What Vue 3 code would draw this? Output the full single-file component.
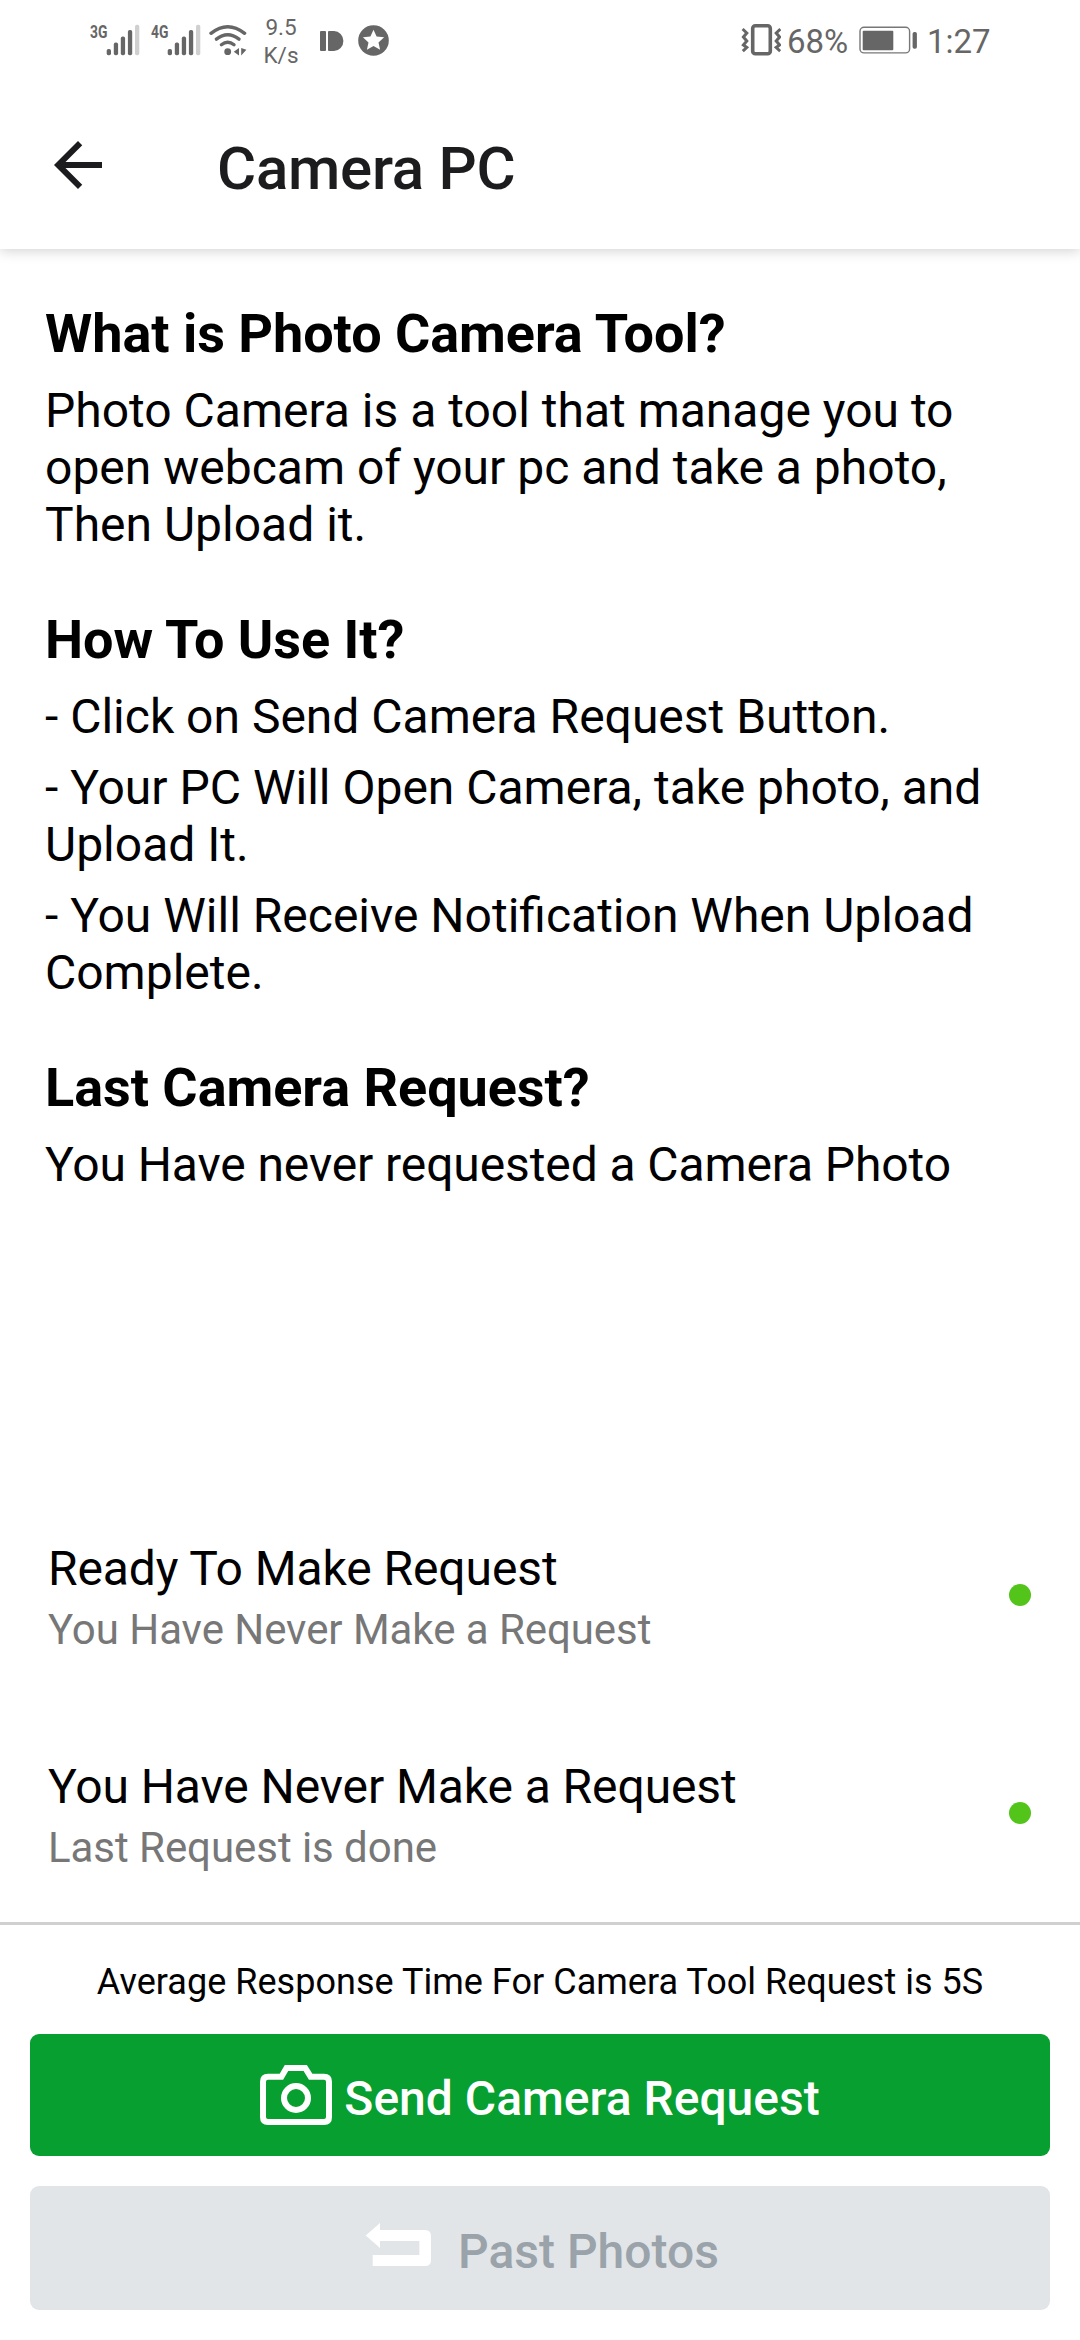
<script setup>
const sections = [
  {
    title: 'What is Photo Camera Tool?',
    lines: ['Photo Camera is a tool that manage you to open webcam of your pc and take a photo, Then Upload it.']
  },
  {
    title: 'How To Use It?',
    lines: [
      '- Click on Send Camera Request Button.',
      '- Your PC Will Open Camera, take photo, and Upload It.',
      '- You Will Receive Notification When Upload Complete.'
    ]
  },
  {
    title: 'Last Camera Request?',
    lines: ['You Have never requested a Camera Photo'],
    tight: true
  }
]

const statuses = [
  { title: 'Ready To Make Request', note: 'You Have Never Make a Request' },
  { title: 'You Have Never Make a Request', note: 'Last Request is done' }
]

const signals = ['3G', '4G']
</script>

<template>
  <div class="screen">
    <div class="status-bar">
      <div class="status-left">
        <svg v-for="s in signals" :key="s" class="signal" width="61" height="40" viewBox="0 0 61 40">
          <text x="0" y="18.4" textLength="17.4" lengthAdjust="spacingAndGlyphs">{{ s }}</text>
          <g fill="#666">
            <rect x="16.7" y="29" width="4.3" height="6.2" rx="1.8" />
            <rect x="23.8" y="22.6" width="4.3" height="12.6" rx="1.8" />
            <rect x="30.8" y="16.6" width="4.3" height="18.6" rx="1.8" />
            <rect x="37.9" y="10" width="4.3" height="25.2" rx="1.8" />
          </g>
          <rect x="45" y="4.8" width="4.3" height="30.4" rx="1.8" fill="#d0d0d0" />
        </svg>
        <svg class="wifi" width="40" height="40" viewBox="208 20 40 40">
          <g fill="none" stroke="#666" stroke-width="3.4" stroke-linecap="round">
            <path d="M211 33.3Q227.7 20 244.6 33.3" />
            <path d="M216.4 39.1Q227.7 30.2 239 39.1" />
            <path d="M221.4 44.7Q227.7 39.6 234 44.7" />
          </g>
          <circle cx="227.7" cy="51.7" r="3.4" fill="#666" />
          <path d="M233.8 51.7L239 48V55.4ZM241.2 48V55.4L246.4 49.8Z" fill="#666" />
        </svg>
        <div class="speed"><span>9.5</span><span>K/s</span></div>
        <svg class="id-icon" width="24" height="20" viewBox="0 0 24 20">
          <rect x="0" y="0" width="6" height="20" rx="1" fill="#666" />
          <path d="M9 0H14A9.4 10 0 0 1 14 20H9Q8 20 8 19V1Q8 0 9 0Z" fill="#666" />
        </svg>
        <svg class="star-icon" width="31" height="31" viewBox="-15.5 -15.5 31 31">
          <circle r="15.3" fill="#666" />
          <path d="M0-10.8L3.1-3.9 10.6-3.2 5 1.9 6.6 9.3 0 5.5-6.6 9.3-5 1.9-10.6-3.2-3.1-3.9Z" fill="#fff" />
        </svg>
      </div>
      <div class="status-right">
        <svg width="40" height="34" viewBox="741 23 40 34">
          <rect x="752.7" y="25.8" width="17.6" height="28" rx="2.6" fill="none" stroke="#666" stroke-width="3.6" />
          <g fill="none" stroke="#666" stroke-width="3">
            <path d="M742.6 29L746.8 33 743.4 37 746.8 41 743.4 45 746.8 47.5 742.8 51.2" />
            <path d="M780.4 29L776.2 33 779.6 37 776.2 41 779.6 45 776.2 47.5 780.2 51.2" />
          </g>
        </svg>
        <span class="pct">68%</span>
        <svg width="59" height="28" viewBox="859 26 59 28">
          <rect x="860" y="27.3" width="49.6" height="25.6" rx="4" fill="none" stroke="#777" stroke-width="1.4" />
          <rect x="862.7" y="30.7" width="30.6" height="19.6" rx="1" fill="#666" />
          <rect x="912.6" y="32" width="4.3" height="16.8" rx="1.8" fill="#666" />
        </svg>
        <span class="clock">1:27</span>
      </div>
    </div>

    <header class="app-bar">
      <svg width="72" height="72" viewBox="0 0 24 24">
        <path d="M20 11H7.83l5.59-5.59L12 4l-8 8 8 8 1.41-1.41L7.83 13H20z" fill="#1c1c1e" />
      </svg>
      <h1>Camera PC</h1>
    </header>

    <main>
      <section v-for="s in sections" :key="s.title" :class="{ tight: s.tight }">
        <h2>{{ s.title }}</h2>
        <p v-for="l in s.lines" :key="l">{{ l }}</p>
      </section>
    </main>

    <div class="statuses">
      <div v-for="s in statuses" :key="s.title" class="status-row">
        <div>
          <div class="row-title">{{ s.title }}</div>
          <div class="row-note">{{ s.note }}</div>
        </div>
        <span class="dot"></span>
      </div>
    </div>

    <footer>
      <p class="average">Average Response Time For Camera Tool Request is 5S</p>
      <button class="btn primary">
        <svg width="72" height="60" viewBox="260 2065 72 60">
          <g fill="none" stroke="#fff" stroke-width="6">
            <path d="M268 2076.7H281.4L286.5 2068H305.2L310.6 2076.7H324Q329 2076.7 329 2081.7V2117Q329 2122 324 2122H268Q263 2122 263 2117V2081.7Q263 2076.7 268 2076.7Z" />
            <circle cx="296" cy="2098" r="12" />
          </g>
        </svg>
        <span>Send Camera Request</span>
      </button>
      <button class="btn secondary" disabled>
        <svg width="72" height="44" viewBox="361 2223 72 44">
          <path d="M365.7 2235.4L380 2223V2230H425Q431 2230 431 2236V2260Q431 2266 425 2266H372.7V2255H419.4V2241H380V2248Z" fill="#fff" />
        </svg>
        <span>Past Photos</span>
      </button>
    </footer>
  </div>
</template>

<style>
body {
  margin: 0;
  background: #fff;
}
</style>

<style scoped>
.screen {
  display: flex;
  flex-direction: column;
  width: 1080px;
  height: 2340px;
  overflow: hidden;
  background: #fff;
  color: #000;
  font-family: Roboto, "Noto Sans", sans-serif;
}
h1, h2, p {
  margin: 0;
}
svg {
  display: block;
  flex: none;
}
.status-bar {
  position: relative;
  z-index: 1;
  display: flex;
  justify-content: space-between;
  height: 84px;
  padding: 0 89px 0 90px;
  box-sizing: border-box;
  background: #fff;
  color: #666;
}
.status-left,
.status-right {
  display: flex;
  align-items: flex-start;
}
.signal {
  margin-top: 20px;
}
.signal text {
  font-size: 19px;
  font-weight: 700;
  fill: #666;
}
.wifi {
  margin: 20px 0 0 -4px;
}
.speed {
  display: flex;
  flex-direction: column;
  align-items: center;
  width: 34px;
  margin: 14px 0 0 16px;
  font-size: 22.5px;
  line-height: 27.5px;
}
.id-icon {
  margin: 31px 0 0 22px;
}
.star-icon {
  margin: 25px 0 0 13.5px;
}
.status-right {
  font-size: 33px;
  line-height: 39px;
}
.status-right svg:first-child {
  margin-top: 23px;
}
.pct {
  width: 78px;
  padding-left: 6px;
  margin-top: 22px;
  box-sizing: border-box;
}
.status-right svg:nth-of-type(2) {
  margin-top: 26px;
}
.clock {
  width: 64px;
  margin: 22px 0 0 9px;
}
.app-bar {
  display: flex;
  height: 165px;
  box-sizing: border-box;
  padding: 45px 0 0 42px;
  box-shadow: 0 2px 12px rgba(0, 0, 0, 0.18);
}
h1 {
  margin: 5px 0 0 103px;
  font-size: 60px;
  line-height: 70px;
  font-weight: 500;
  letter-spacing: -0.25px;
  color: #1c1c1e;
}
main {
  padding: 53px 75px 0 45px;
}
section + section {
  margin-top: 55px;
}
h2 {
  margin-bottom: 17px;
  font-size: 54px;
  line-height: 63px;
  font-weight: 700;
  letter-spacing: -0.04px;
}
section p {
  font-size: 48px;
  line-height: 57px;
}
section p + p {
  margin-top: 14px;
}
.tight p {
  letter-spacing: -0.1px;
}
.statuses {
  display: flex;
  flex-direction: column;
  gap: 104px;
  margin-top: auto;
  padding: 0 49px 50px 48px;
}
.status-row {
  display: flex;
  align-items: center;
  justify-content: space-between;
}
.row-title {
  font-size: 48px;
  line-height: 57px;
  letter-spacing: -0.09px;
}
.row-note {
  margin-top: 8px;
  font-size: 42px;
  line-height: 49px;
  letter-spacing: -0.05px;
  color: #777;
}
.dot {
  width: 22px;
  height: 22px;
  margin-top: -5px;
  border-radius: 50%;
  background: #52c41a;
}
footer {
  height: 418px;
  box-sizing: border-box;
  padding: 36px 30px 0;
  border-top: 3px solid #d0d0d0;
}
.average {
  margin-bottom: 31px;
  font-size: 36px;
  line-height: 42px;
  letter-spacing: 0.03px;
  text-align: center;
}
.btn {
  display: flex;
  align-items: center;
  justify-content: center;
  width: 1020px;
  height: 122px;
  padding: 0;
  border: 0;
  border-radius: 9px;
  font-family: inherit;
  font-size: 48px;
  line-height: 57px;
  font-weight: 500;
}
.btn span {
  padding-top: 7px;
}
.primary {
  gap: 12px;
  background: #079f2f;
  color: #fff;
}
.secondary {
  gap: 25px;
  height: 124px;
  margin-top: 30px;
  background: #e1e5e8;
  color: #9aa2aa;
}
.secondary svg {
  margin-top: -7px;
}
</style>
